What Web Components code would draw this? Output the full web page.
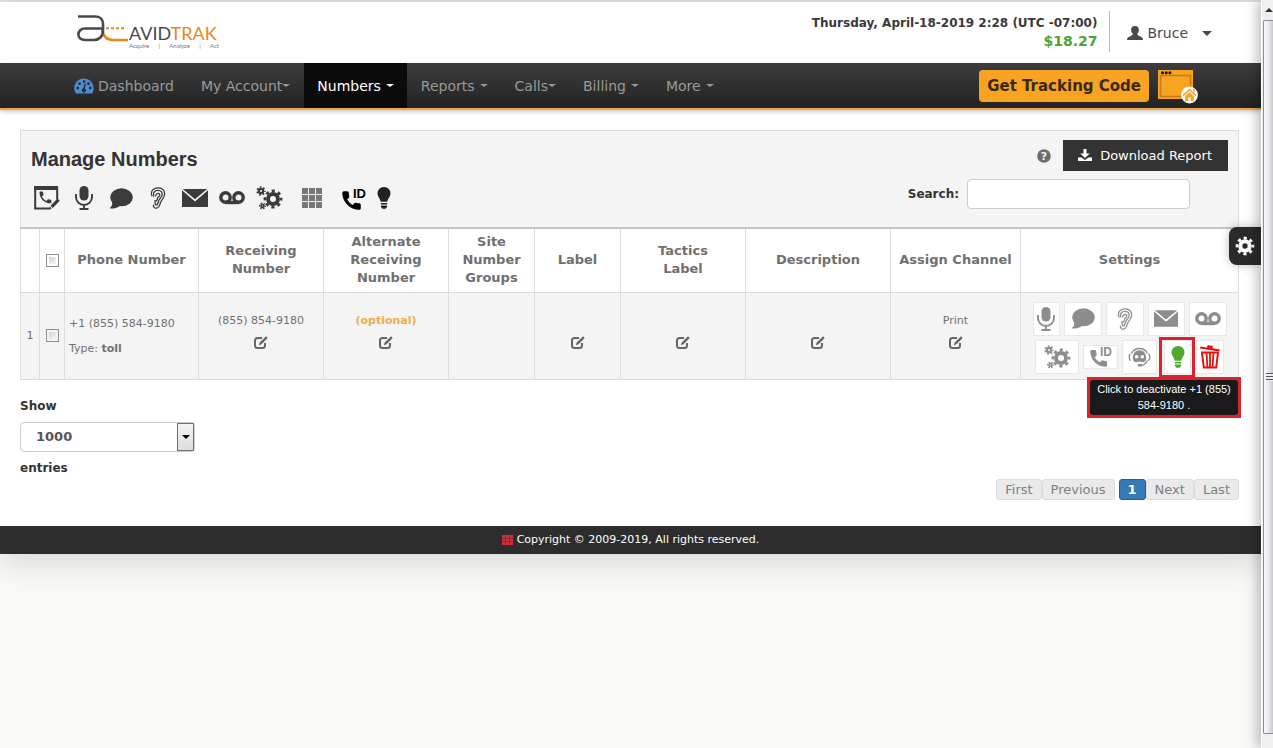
<!DOCTYPE html>
<html lang="en">
<head>
<meta charset="utf-8">
<title>AvidTrak - Manage Numbers</title>
<style>
  html, body { margin: 0; height: 100%; }
  body { font-family: "DejaVu Sans", Verdana, sans-serif; font-size: 12px; line-height: 18px; color: #333; background: #f9f9f8; }
</style>
</head>
<body>
<av-shell>
  <av-topbar slot="top" date="Thursday, April-18-2019 2:28 (UTC -07:00)" balance="$18.27" user="Bruce"></av-topbar>
  <av-nav slot="top">
    <av-nav-item icon="dashboard">Dashboard</av-nav-item>
    <av-nav-item caret="tight">My Account</av-nav-item>
    <av-nav-item caret active>Numbers</av-nav-item>
    <av-nav-item caret>Reports</av-nav-item>
    <av-nav-item caret="tight">Calls</av-nav-item>
    <av-nav-item caret>Billing</av-nav-item>
    <av-nav-item caret>More</av-nav-item>
  </av-nav>
  <av-panel heading="Manage Numbers">
    <av-number-table></av-number-table>
  </av-panel>
  <av-page-length></av-page-length>
  <av-pagination></av-pagination>
  <av-footer slot="bottom">Copyright © 2009-2019, All rights reserved.</av-footer>
</av-shell>

<script>
const gear = (x, y, r, n, t) => {
  const o = r + t / 2, seg = Math.PI * o / n;
  return `<g transform="translate(${x} ${y})" fill="none" stroke="currentColor"><circle r="${r - t * .7}" stroke-width="${t * 1.5}"/><circle r="${o}" stroke-width="${t}" stroke-dasharray="${seg}" stroke-dashoffset="${seg / 2}"/></g>`;
};
const HANDSET = 'M6.62 10.79c1.44 2.83 3.76 5.14 6.59 6.59l2.2-2.2c.27-.27.67-.36 1.02-.24 1.12.37 2.33.57 3.57.57.55 0 1 .45 1 1V20c0 .55-.45 1-1 1-9.39 0-17-7.61-17-17 0-.55.45-1 1-1h3.5c.55 0 1 .45 1 1 0 1.25.2 2.45.57 3.57.11.35.03.74-.25 1.02l-2.2 2.2z';
const BULB = '<path d="M7 0a6.4 6.4 0 0 1 6.5 6.4c0 3-2.6 4.700-3.200 8.400H3.700C3.100 11.100.5 9.400.5 6.400A6.400 6.400 0 0 1 7 0z"/><path d="M3.800 15.900h6.400v1.700H3.800zM4 18.600h6v1.400l-1.400 1.800H5.400L4 20z"/>';
/* name: [width, height, markup] */
const ICONS = {
  numberEdit: [26, 24, '<path d="M1.200 2.500v20h15M1.200 2.500h22v11" fill="none" stroke="currentColor" stroke-width="2"/><path d="M0 0h24v4H0z"/><g transform="translate(3.500 3.500) scale(.66)"><path d="' + HANDSET + '"/></g><path d="M23.500 12.500l2.300 2.200-7 7.200-2.300-2.200zM15.900 20.500l2 2-3 1z"/>'],
  mic: [18, 24, '<rect x="4.500" width="9" height="14.500" rx="4.500"/><path d="M1 8v3a8 8 0 0 0 16 0V8M9 19v4M4.500 23h9" fill="none" stroke="currentColor" stroke-width="1.900"/>'],
  chat: [24, 21, '<ellipse cx="12.500" cy="9.300" rx="11.200" ry="9"/><path d="M2.800 13C4 17 2.500 18.500.6 20.200 5.500 21.400 9 19.500 12 17z"/>'],
  ear: [16, 22, '<g fill="none" stroke="currentColor" stroke-width="1.300" stroke-linecap="round"><path d="M2 9C0 3.500 4 .8 8.200.8c4.600 0 6.800 3.200 6.300 7-.4 3.400-2.700 4.800-3.800 7.200-.9 2.200-1 5.700-4.200 6.200-2 .2-3.200-1.300-3.100-3"/><path d="M3.600 8.800C2.900 5.300 5 3.300 8 3.300c3 0 4.500 2 4.100 4.700-.4 2.400-2.300 3.500-3.200 5.300-.8 1.700-.7 4-2.600 4.800"/><path d="M5.500 9c1-3.500 4.600-3 4.300-.7-.3 1.900-2.400 1.200-2.400 3.400 0 1.600-1.200 2.800-2.400 1.900M5 14.500l.3 3"/></g>'],
  mail: [26, 18, '<path d="M.8 0h24.400L13 10.200zM0 1.300v16.700h26V1.300L13 12.600z"/>'],
  voicemail: [26, 14, '<g fill="none" stroke="currentColor" stroke-width="3.400"><circle cx="6.500" cy="6.500" r="4.700"/><circle cx="19.500" cy="6.500" r="4.700"/><path d="M6.500 11.500h13"/></g>'],
  gears: [27, 24, gear(17, 13, 6.8, 8, 2.600) + gear(5, 5, 3.2, 7, 1.500) + gear(6.5, 20, 2.3, 6, 1.200)],
  cog: [20, 20, gear(10, 10, 6.6, 8, 2.700)],
  grid: [20, 20, [0, 7, 14].map(y => [0, 7, 14].map(x => `<rect x="${x}" y="${y}" width="6" height="6"/>`).join('')).join('')],
  callerId: [24, 23, '<g transform="translate(-2 2) scale(.96)"><path stroke="currentColor" stroke-width="1.200" stroke-linejoin="round" d="' + HANDSET + '"/></g><text x="11" y="11" font-family="Liberation Sans, sans-serif" font-weight="700" font-size="13">ID</text>'],
  bulb: [14, 22, BULB],
  bot: [26, 24, '<g fill="none" stroke="currentColor" stroke-width="1.500"><path d="M4 8a10 10 0 0 1 18 0M22 16c-1.500 3.500-4 5-7 5.500"/><path d="M2.800 8.500C.8 10 .8 14.500 3 16M23.200 8.500c2 1.500 2 6-.2 7.500"/></g><rect x="11" y="20" width="5" height="2.600" rx="1"/><path fill-rule="evenodd" d="M13 4.500c5 0 7.500 4 7.500 8.500 0 3-1.500 5-4 5-1.300 0-2-.8-3.500-.8s-2.200.8-3.500.8c-2.500 0-4-2-4-5 0-4.500 2.500-8.500 7.500-8.500zM9.800 9.700a2 2 0 1 0 0 4 2 2 0 0 0 0-4zm6.400 0a2 2 0 1 0 0 4 2 2 0 0 0 0-4z"/>'],
  trash: [20, 25, '<path d="M.4 2.600L7 3.400 7.700 1l5 .9.1 2.300 7 1.300-.3 2L0 4.600z"/><path fill="none" stroke="currentColor" stroke-width="2" d="M2 8.500h16l-1.800 15H3.800z"/><path fill="none" stroke="currentColor" stroke-width="1.800" d="M6.600 9l.8 14M10 9v14M13.400 9l-.8 14"/>'],
  edit: [14, 13, '<path fill="none" stroke="currentColor" stroke-width="2" d="M8 2H3.500Q1 2 1 4.500v5Q1 12 3.500 12h5Q11 12 11 9.500V7"/><path d="M12 .3l1.700 1.600L7.500 8.300l-2.700 1 .9-2.700z"/>'],
  user: [16, 14, '<path d="M8 0c2.600 0 3.900 1.600 3.900 3.800 0 1.800-.8 3-1.700 4 0 1.200.5 1.600 2.100 2.300C14.700 11.100 16 11.600 16 14H0c0-2.400 1.300-2.900 3.700-3.900 1.600-.7 2.100-1.100 2.100-2.300-.9-1-1.700-2.200-1.700-4C4.100 1.600 5.400 0 8 0z"/>'],
  dashboard: [20, 16, '<path d="M10 .5a9.700 9.700 0 0 1 9.700 9.700c0 2-.6 3.700-1.600 5.300H1.900A9.700 9.700 0 0 1 10 .5z"/><g fill="#2c2c2c"><circle cx="3.800" cy="10" r="1.400"/><circle cx="5.500" cy="5.700" r="1.400"/><circle cx="10" cy="3.600" r="1.400"/><circle cx="14.500" cy="5.700" r="1.400"/><circle cx="16.200" cy="10" r="1.400"/><path d="M10.600 5.500l1.200.2-.9 4.800a2.200 2.200 0 1 1-1.600-.2z"/></g>'],
  download: [14, 13, '<path d="M5.500 0h3v4.500h3.200L7 9 2.300 4.500h3.200z"/><path d="M0 8.500h3.500L7 11 10.500 8.500H14V12H0z"/>'],
  help: [14, 14, '<circle cx="7" cy="7" r="6.800"/><text x="7" y="11" text-anchor="middle" fill="#f4f4f4" font-family="DejaVu Sans, sans-serif" font-weight="700" font-size="11">?</text>'],
  menu: [11, 10, '<path d="M0 0h11v10H0z" opacity=".45"/>' + [0, 4, 7].map(y => [0, 4, 8].map(x => `<rect x="${x}" y="${y}" width="3" height="${y === 4 ? 2 : 3}"/>`).join('')).join('')],
  windowHome: [40, 34, '<path fill="#f8a321" d="M0 0h35v29H0z"/><path fill="none" stroke="#c47c10" stroke-width="1.500" d="M2.500 5.500h30v21h-30z"/><g fill="#111"><circle cx="4.500" cy="2.800" r="1.500"/><circle cx="8.200" cy="2.800" r="1.500"/><circle cx="11.900" cy="2.800" r="1.500"/></g><circle cx="31.500" cy="25" r="8.400" fill="#fff"/><g fill="#f8a321"><path d="M31.500 18.500l7 6.500-1 1.200-6-5.500-6 5.500-1-1.200z"/><path d="M27.200 26l4.300-4 4.300 4v5h-3v-3.500h-2.600V31h-3zM35 19h1.700v3.500L35 21z"/></g>'],
  mark: [52, 27, '<g fill="none" stroke-width="2.600"><path stroke="#e8871c" d="M25 14.500c1 6 4 10.500 11 10.500h15"/><path stroke="#e8871c" stroke-width="2" stroke-dasharray="3 2" d="M29 13.300h20"/><path stroke="#4a4a4c" d="M1 1.500h17c5 0 8 3 8 7v7c0 6-4 9.500-9 9.500H8c-4 0-6.600-2-6.600-5.500S4 13.500 8 13.500h17"/></g>'],
};

function define(name, css, html) {
  customElements.define(name, class extends HTMLElement {
    constructor() {
      super();
      this.attachShadow({ mode: 'open' });
    }
    connectedCallback() {
      if (this.shadowRoot.firstChild) return;
      const t = document.createElement('template');
      t.innerHTML = `<style>:host,*{box-sizing:border-box}${css}</style>` + (typeof html === 'function' ? html(this) : html);
      this.shadowRoot.append(t.content.cloneNode(true));
    }
  });
}

define('av-icon', ':host{display:inline-flex;flex:none}svg{display:block;fill:currentColor}', el => {
  const [w, h, body] = ICONS[el.getAttribute('name')];
  const k = Number(el.getAttribute('size') || 100) / 100;
  return `<svg width="${Math.round(w * k)}" height="${Math.round(h * k)}" viewBox="0 0 ${w} ${h}" aria-hidden="true">${body}</svg>`;
});

define('av-shell', `
  :host{display:flex;min-height:100%}
  .page{flex:1;min-width:0;position:relative;border-top:2px solid #e2e2e2}
  .sheet{background:#fff;box-shadow:0 8px 32px rgba(0,0,0,.14)}
  main{padding:20px 22px 26px 20px}
`, `<div class="page"><div class="sheet"><slot name="top"></slot><main><slot></slot></main><slot name="bottom"></slot></div><av-side-tab></av-side-tab></div><av-scroll-strip></av-scroll-strip>`);

define('av-side-tab', `
  :host{position:absolute;right:0;top:225px}
  button{display:flex;align-items:center;justify-content:center;width:32px;height:38px;padding:0;border:0;border-radius:8px 0 0 8px;background:#2a2a2a;color:#fff;box-shadow:0 0 10px rgba(0,0,0,.25)}
`, `<button aria-label="Page settings"><av-icon name="cog"></av-icon></button>`);

define('av-scroll-strip', `
  :host{display:flex;flex-direction:column;flex:none;width:12px;position:sticky;top:0;height:100vh;background:#efefef;border-left:1px solid #fff;box-shadow:-2px 0 14px rgba(0,0,0,.35);z-index:1}
  .arrow{height:20px;display:flex;align-items:center;justify-content:flex-end}
  .arrow::before{content:"";border:4px solid transparent;border-top:0;border-bottom:4px solid #333}
  .thumb{flex:1;margin-left:1px;border:1px solid #8f8f93;border-right:0;border-radius:2px 0 0 2px;background:linear-gradient(90deg,#fafafa,#ececee 45%,#c9c9d0);display:flex;align-items:center;justify-content:flex-end}
  .grip{width:7px;height:8px;background:repeating-linear-gradient(#55555a 0 1px,#eee 1px 3px)}
  .end{height:14px}
`, `<div class="arrow"></div><div class="thumb"><div class="grip"></div></div><div class="end"></div>`);

define('av-logo', `
  a{display:flex;text-decoration:none;align-items:flex-start;font-family:Lato,sans-serif}
  .words{display:flex;flex-direction:column;width:90px;padding-top:10px}
  .name{font-size:18px;line-height:17px;color:#4a4a4c}
  .name b{font-weight:400;color:#e8871c}
  .tag{display:flex;justify-content:space-between;font-size:6px;line-height:8px;color:#777}
`, `<a href="#" aria-label="AvidTrak home"><av-icon name="mark"></av-icon><span class="words"><span class="name">AVID<b>TRAK</b></span><span class="tag"><span>Acquire</span><span>|</span><span>Analyze</span><span>|</span><span>Act</span></span></a>`);

define('av-topbar', `
  :host{display:flex;justify-content:space-between;height:61px;padding:9px 49px 0 77px;background:#fff}
  av-logo{margin-top:4px}
  .account{display:flex;align-items:flex-start}
  .info{text-align:right;font-weight:700;padding:4px 12px 0 0;color:#3a3a3a}
  .info .balance{font-size:14px;color:#4ba52f;line-height:18px}
  .info .date{line-height:17px}
  button{display:flex;align-items:center;height:41px;border:0;border-left:1px solid #bbb;background:none;padding:3px 0 0 17px;font:14px "DejaVu Sans",Verdana,sans-serif;color:#444b52}
  button av-icon{margin-right:4px}
  .caret{margin-left:14px;border:5px solid transparent;border-top-color:#444b52;border-bottom:0}
`, el => `<av-logo></av-logo><div class="account"><div class="info"><div class="date">${el.getAttribute('date')}</div><div class="balance">${el.getAttribute('balance')}</div></div><button><av-icon name="user"></av-icon>${el.getAttribute('user')}<span class="caret"></span></button></div>`);

define('av-nav', `
  :host{display:flex;justify-content:space-between;position:relative;background:linear-gradient(#3d3d3d,#222);border-bottom:2px solid #f0a63c;box-shadow:0 2px 4px rgba(0,0,0,.2);padding:0 63px 0 61px}
  nav{display:flex;gap:1px}
  .tools{display:flex;align-items:center;gap:9px}
  a.code{display:block;padding:0 8px;border-radius:4px;background:#f8a321;color:#3a2a12;font-weight:700;font-size:15px;line-height:32px;text-decoration:none;white-space:nowrap}
  .home{line-height:0;padding-top:2px}
`, `<nav aria-label="Main"><slot></slot></nav><div class="tools"><a class="code" href="#">Get Tracking Code</a><a class="home" href="#" aria-label="Home window"><av-icon name="windowHome"></av-icon></a></div>`);

define('av-nav-item', `
  :host{display:block}
  a{display:flex;align-items:center;height:45px;padding:0 13px;font-size:14px;color:#999;text-decoration:none;white-space:nowrap}
  :host([active]) a{background:#0b0b0b;color:#fff}
  av-icon{color:#4a8fd6;margin-right:4px}
  .caret{margin-left:5px;border:4px solid transparent;border-top:3px solid;border-bottom:0}
  :host([caret="tight"]) .caret{margin-left:0}
`, el => `<a href="#">${el.hasAttribute('icon') ? `<av-icon name="${el.getAttribute('icon')}"></av-icon>` : ''}<slot></slot>${el.hasAttribute('caret') ? '<span class="caret"></span>' : ''}</a>`);

define('av-panel', `
  :host{display:block}
  header{display:flex;justify-content:space-between;height:97px;padding:9px 10px;background:#f4f4f4;border:1px solid #ddd;border-bottom:0}
  h1{margin:0;font:700 20px/38px "Liberation Sans",Arial,sans-serif;color:#333}
  .actions{display:flex;flex-direction:column;align-items:flex-end;gap:8px}
  .row{display:flex;align-items:center}
  .row av-icon[name=help]{color:#6d6d6d;margin-right:12px}
  .download{display:flex;align-items:center;gap:8px;height:31px;padding:0 16px 0 15px;border:0;background:#333;color:#fff;font:13px "DejaVu Sans",Verdana,sans-serif}
  .search{padding-right:38px;gap:8px}
  label{font-weight:700}
  input{width:223px;height:30px;border:1px solid #ccc;border-radius:4px;background:#fff;padding:0 10px}
`, el => `<header><div><h1>${el.getAttribute('heading')}</h1><av-toolbar></av-toolbar></div><div class="actions"><div class="row"><av-icon name="help"></av-icon><button class="download"><av-icon name="download"></av-icon>Download Report</button></div><div class="row search"><label for="q">Search:</label><input id="q" type="text"></div></div></header><slot></slot>`);

define('av-toolbar', `
  :host{display:flex;height:40px;margin-left:-3px;color:#3b3b3b}
  button{display:flex;align-items:center;justify-content:center;width:37px;padding:0;border:0;background:none;color:inherit}
  .gears{width:38px}.grid{width:48px;color:#777}.callerId{width:36px;color:#000}.bulb{width:24px;color:#222}
`, () => [['numberEdit', 'Edit number'], ['mic', 'Recording'], ['chat', 'Text message'], ['ear', 'Whisper'], ['mail', 'Email'], ['voicemail', 'Voicemail'], ['gears', 'Settings'], ['grid', 'Keypad'], ['callerId', 'Caller ID'], ['bulb', 'Activate']]
  .map(([n, l]) => `<button class="${n}" aria-label="${l}"><av-icon name="${n}"></av-icon></button>`).join(''));

const COLS = [[19, ''], [25, '<input type="checkbox" aria-label="Select all numbers">'], [134, 'Phone Number'], [125, 'Receiving<br>Number'], [125, 'Alternate<br>Receiving<br>Number'], [86, 'Site<br>Number<br>Groups'], [86, 'Label'], [125, 'Tactics<br>Label'], [145, 'Description'], [130, 'Assign Channel'], [218, 'Settings']];
const editCell = (text, label) => `<td class="edit"><div>${text}</div><a href="#" aria-label="${label}"><av-icon name="edit"></av-icon></a></td>`;

define('av-number-table', `
  :host{display:block}
  table{width:100%;table-layout:fixed;border-collapse:collapse;background:#fff;border-top:2px solid #c4c4c4;color:#707070;font-size:11px}
  th,td{border:1px solid #ddd;padding:0;text-align:center}
  th{height:64px;font-size:13px;line-height:18px;font-weight:700;border-top:0}
  td{height:87px;background:#f4f4f4;vertical-align:middle}
  input{appearance:none;display:block;width:13px;height:13px;margin:0 auto;border:1px solid #8e8f8f;background:linear-gradient(135deg,#cfd3d8,#f6f6f6) content-box #f4f4f4;padding:2px}
  .phone{text-align:left;padding-left:4px;line-height:25px}
  .edit{vertical-align:top;padding-top:17px;line-height:22px}
  .edit div{height:22px}
  .edit a{display:flex;justify-content:center;align-items:center;height:22px;color:#666}
  .optional{color:#f0ad4e}
  .settings{vertical-align:top;padding-top:9px}
`, `<table><colgroup>${COLS.map(c => `<col style="width:${c[0]}px">`).join('')}</colgroup>
<thead><tr>${COLS.map(c => c[1] ? `<th scope="col">${c[1]}</th>` : '<th></th>').join('')}</tr></thead>
<tbody><tr><td>1</td><td><input type="checkbox" aria-label="Select +1 (855) 584-9180"></td>
<td class="phone">+1 (855) 584-9180<br>Type: <b>toll</b></td>
${editCell('(855) 854-9180', 'Edit receiving number')}${editCell('<b class="optional">(optional)</b>', 'Edit alternate number')}<td></td>
${editCell('', 'Edit label')}${editCell('', 'Edit tactics label')}${editCell('', 'Edit description')}${editCell('Print', 'Edit channel')}
<td class="settings"><av-number-actions></av-number-actions></td></tr></tbody></table>`);

define('av-number-actions', `
  :host{display:block;color:#8d8d8d}
  .row{display:flex;justify-content:center;align-items:center;gap:4px}
  .row+.row{padding-top:4px}
  button{display:flex;align-items:center;justify-content:center;flex:none;height:34px;padding:0;border:1px solid #e8e8e8;background:#fff;color:inherit}
  .mic,.bulb{width:27px}.chat,.voicemail,.ear{width:38px}.mail{width:37px}
  .gears{width:44px}.callerId{width:35px;height:24px}.bot{width:35px}.trash{width:28px;color:#e8110f}
  .bulb{color:#4ea92b}
  .wrap{position:relative;margin:0 1px 0 3px}
  .mark{position:absolute;inset:-3px -4px -4px -5px;border:3px solid #d9232e;pointer-events:none}
  av-tooltip{position:absolute;top:37px;left:-77px}
`, () => {
  const b = (n, l, s) => `<button class="${n}" aria-label="${l}"><av-icon name="${n}" size="${s || 100}"></av-icon></button>`;
  return `<div class="row">${b('mic', 'Recording')}${b('chat', 'Text message')}${b('ear', 'Whisper')}${b('mail', 'Email', 92)}${b('voicemail', 'Voicemail')}</div>
<div class="row">${b('gears', 'Settings')}${b('callerId', 'Caller ID', 92)}${b('bot', 'Chat bot', 90)}<span class="wrap">${b('bulb', 'Deactivate')}<span class="mark"></span><av-tooltip>Click to deactivate +1 (855) 584-9180 .</av-tooltip></span>${b('trash', 'Delete')}</div>`;
});

define('av-tooltip', `
  :host{display:block;width:154px;background:#d9232e;padding:3px;z-index:2}
  div{background:#1a1a1a;border-radius:3px;padding:1px 4px 2px;text-align:center;color:#fff;font:11px/16px "Liberation Sans",Arial,sans-serif}
`, `<div role="tooltip"><slot></slot></div>`);

define('av-page-length', `
  :host{display:flex;flex-direction:column;align-items:flex-start;gap:7px;padding-top:17px;font-weight:700}
  .box{position:relative;width:175px}
  select{appearance:none;display:block;width:100%;height:30px;border:1px solid #ccc;border-radius:4px;background:#fff;padding:0 15px;font:700 13px "DejaVu Sans",Verdana,sans-serif;color:#555}
  .arrow{position:absolute;right:1px;top:1px;bottom:1px;width:17px;border:1px solid #707070;background:linear-gradient(#f3f3f3,#ddd);display:flex;align-items:center;justify-content:center;pointer-events:none}
  .arrow::before{content:"";border:4px solid transparent;border-top-color:#000;border-bottom:0}
`, `<label for="len">Show</label><div class="box"><select id="len"><option>1000</option></select><span class="arrow"></span></div><span>entries</span>`);

define('av-pagination', `
  :host{display:flex;justify-content:flex-end;padding-top:2px}
  button{height:21px;padding:0 8px;border:1px solid #dcdcdc;border-radius:3px;background:#eaeaea;color:#808080;font:13px/19px "DejaVu Sans",Verdana,sans-serif}
  .current{margin-left:4px;border-color:#285e8e;background:#337ab7;color:#fff;font-weight:700}
`, `<button>First</button><button>Previous</button><button class="current" aria-current="page">1</button><button>Next</button><button>Last</button>`);

define('av-footer', `
  :host{display:flex;justify-content:center;align-items:center;gap:4px;height:28px;background:#2d2d2d;color:#fff;font-size:11px}
  av-icon{color:#d9303f}
`, `<av-icon name="menu"></av-icon><span><slot></slot></span>`);
</script>
</body>
</html>
